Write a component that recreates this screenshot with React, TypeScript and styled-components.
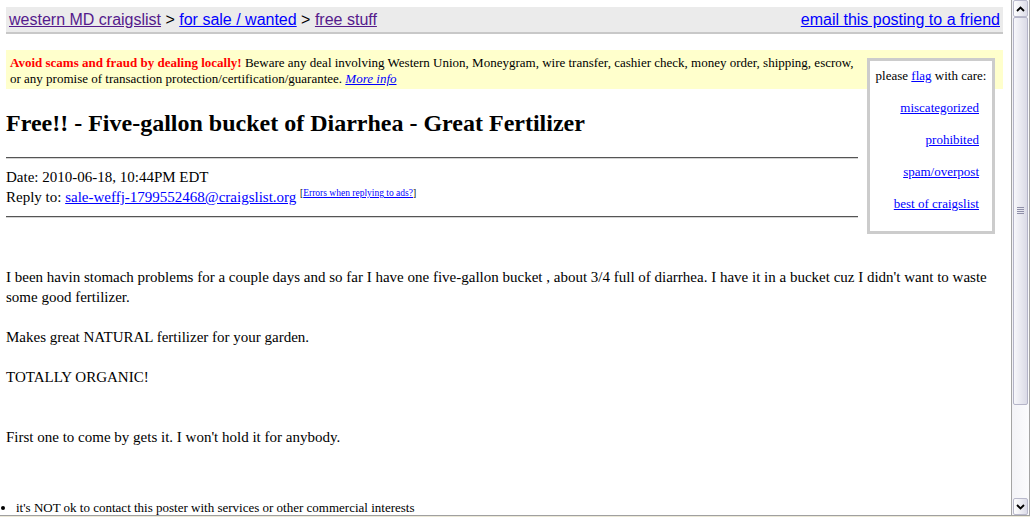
import React from "react";
import styled, { createGlobalStyle } from "styled-components";

const GlobalStyle = createGlobalStyle`
  html, body {
    margin: 0;
    padding: 0;
    background: #fff;
    overflow: hidden;
  }
  body {
    font-family: "Liberation Serif", "Times New Roman", serif;
    font-size: 15px;
    color: #000;
  }
`;

const Window = styled.div`
  width: 1030px;
  height: 517px;
  display: flex;
  flex-direction: column;
  overflow: hidden;
`;

const Viewport = styled.div`
  display: flex;
  height: 515px;
`;

const Page = styled.div`
  flex: 1;
  min-width: 0;
  padding: 7px 8px 0 6px;
  overflow: hidden;
`;

const Link = styled.a<{ $visited?: boolean }>`
  color: ${({ $visited }) => ($visited ? "#551a8b" : "#0000ff")};
  text-decoration: underline;
  cursor: pointer;
`;

const TopBar = styled.div`
  display: flex;
  justify-content: space-between;
  align-items: baseline;
  background: #ebebeb;
  border-bottom: 2px solid #c8c8c8;
  padding: 4px 3px 3px 3px;
  margin-bottom: 16px;
  font-family: "Liberation Sans", Arial, sans-serif;
  font-size: 16px;
  line-height: 18px;
`;

const FlagBox = styled.div`
  float: right;
  box-sizing: border-box;
  width: 128px;
  margin: 8px 8px 0 9px;
  padding: 6.5px 5px 20.5px;
  border: 3px solid #cccccc;
  background: #fff;
  font-size: 13px;
  line-height: 15px;
  display: flex;
  flex-direction: column;
  gap: 17px;
`;

const FlagTitle = styled.div`
  text-align: center;
`;

const FlagLink = styled(Link)`
  align-self: flex-end;
  margin-right: 8px;
`;

const Notice = styled.div`
  background: #ffffcc;
  padding: 5px 4px 2px;
  font-size: 13px;
  line-height: 16px;
`;

const Warn = styled.b`
  color: #ff0000;
`;

const Title = styled.h2`
  margin: 20px 0;
  font-size: 24px;
  line-height: 28px;
  font-weight: bold;
`;

const Rule = styled.hr<{ $top?: number; $bottom?: number }>`
  overflow: hidden;
  height: 0;
  margin: ${({ $top = 0 }) => $top}px 0 ${({ $bottom = 0 }) => $bottom}px;
  border: none;
  border-top: 1px solid #555;
  border-bottom: 1px solid #d4d4d4;
`;

const MetaLine = styled.div<{ $lh: number }>`
  line-height: ${({ $lh }) => $lh}px;
`;

const Sup = styled.sup`
  font-size: 9.5px;
  line-height: 0;
  vertical-align: 6px;
`;

const Body = styled.div`
  clear: both;
  margin-top: 49px;
  line-height: 20px;
`;

const Para = styled.p<{ $after?: number }>`
  margin: 0 0 ${({ $after = 20 }) => $after}px;
`;

const Blurbs = styled.ul`
  margin: 53px 0 0;
  padding-left: 10px;
  font-size: 13px;
  line-height: 15px;
`;

/* XP style scrollbar */
const ScrollBar = styled.div`
  width: 17px;
  height: 515px;
  display: flex;
  flex-direction: column;
  border-left: 1px solid #a4a4a4;
  border-right: 1px solid #a4a4a4;
  background: linear-gradient(to right, #f3f3f7, #fbfbfd);
`;

const ScrollButton = styled.div`
  flex: 0 0 auto;
  box-sizing: border-box;
  height: 17px;
  margin: 0 1px;
  border: 1px solid #b9b9cc;
  border-radius: 2px;
  background: linear-gradient(to right, #ffffff, #dcdce8);
  display: flex;
  align-items: center;
  justify-content: center;
`;

const Thumb = styled.div`
  flex: 0 0 388px;
  box-sizing: border-box;
  margin: 0 1px;
  border: 1px solid #b4b4c8;
  border-radius: 2px;
  background: linear-gradient(to right, #f7f7fb, #dadae6);
  display: flex;
  align-items: center;
  justify-content: center;
`;

const TrackRest = styled.div`
  flex: 1;
`;

const StatusEdge = styled.div`
  height: 2px;
  box-sizing: border-box;
  border-top: 1px solid #a0a0a0;
  background: #ece9d8;
`;

const Chevron = ({ up }: { up?: boolean }) => (
  <svg width="9" height="6" viewBox="0 0 9 6">
    <path
      d={up ? "M1 5 L4.5 1.5 L8 5" : "M1 1 L4.5 4.5 L8 1"}
      fill="none"
      stroke="#000"
      strokeWidth="1.8"
    />
  </svg>
);

const Grip = () => (
  <svg width="7" height="8" viewBox="0 0 7 8">
    {[0.5, 2.5, 4.5, 6.5].map((y) => (
      <line key={y} x1="0" x2="7" y1={y} y2={y} stroke="#8e8ea8" strokeWidth="1" />
    ))}
  </svg>
);

const flagLinks = ["miscategorized", "prohibited", "spam/overpost", "best of craigslist"];

export default function App() {
  return (
    <Window>
      <GlobalStyle />
      <Viewport>
        <Page>
          <TopBar>
            <span>
              <Link $visited>western MD craigslist</Link> &gt; <Link>for sale / wanted</Link> &gt;{" "}
              <Link $visited>free stuff</Link>
            </span>
            <Link>email this posting to a friend</Link>
          </TopBar>

          <FlagBox>
            <FlagTitle>
              please <Link>flag</Link> with care:
            </FlagTitle>
            {flagLinks.map((l) => (
              <FlagLink key={l}>{l}</FlagLink>
            ))}
          </FlagBox>

          <Notice>
            <Warn>Avoid scams and fraud by dealing locally!</Warn> Beware any deal involving Western Union,
            Moneygram, wire transfer, cashier check, money order, shipping, escrow, or any promise of
            transaction protection/certification/guarantee.{" "}
            <Link>
              <i>More info</i>
            </Link>
          </Notice>

          <Title>Free!! - Five-gallon bucket of Diarrhea - Great Fertilizer</Title>
          <Rule $bottom={9} />
          <MetaLine $lh={18}>Date: 2010-06-18, 10:44PM EDT</MetaLine>
          <MetaLine $lh={23}>
            Reply to: <Link>sale-weffj-1799552468@craigslist.org</Link>{" "}
            <Sup>
              [<Link>Errors when replying to ads?</Link>]
            </Sup>
          </MetaLine>
          <Rule $top={7} />

          <Body>
            <Para>
              I been havin stomach problems for a couple days and so far I have one five-gallon bucket , about
              3/4 full of diarrhea. I have it in a bucket cuz I didn't want to waste some good fertilizer.
            </Para>
            <Para>Makes great NATURAL fertilizer for your garden.</Para>
            <Para $after={40}>TOTALLY ORGANIC!</Para>
            <Para $after={0}>First one to come by gets it. I won't hold it for anybody.</Para>
          </Body>

          <Blurbs>
            <li>it's NOT ok to contact this poster with services or other commercial interests</li>
          </Blurbs>
        </Page>

        <ScrollBar>
          <ScrollButton>
            <Chevron up />
          </ScrollButton>
          <Thumb>
            <Grip />
          </Thumb>
          <TrackRest />
          <ScrollButton>
            <Chevron />
          </ScrollButton>
        </ScrollBar>
      </Viewport>
      <StatusEdge />
    </Window>
  );
}
